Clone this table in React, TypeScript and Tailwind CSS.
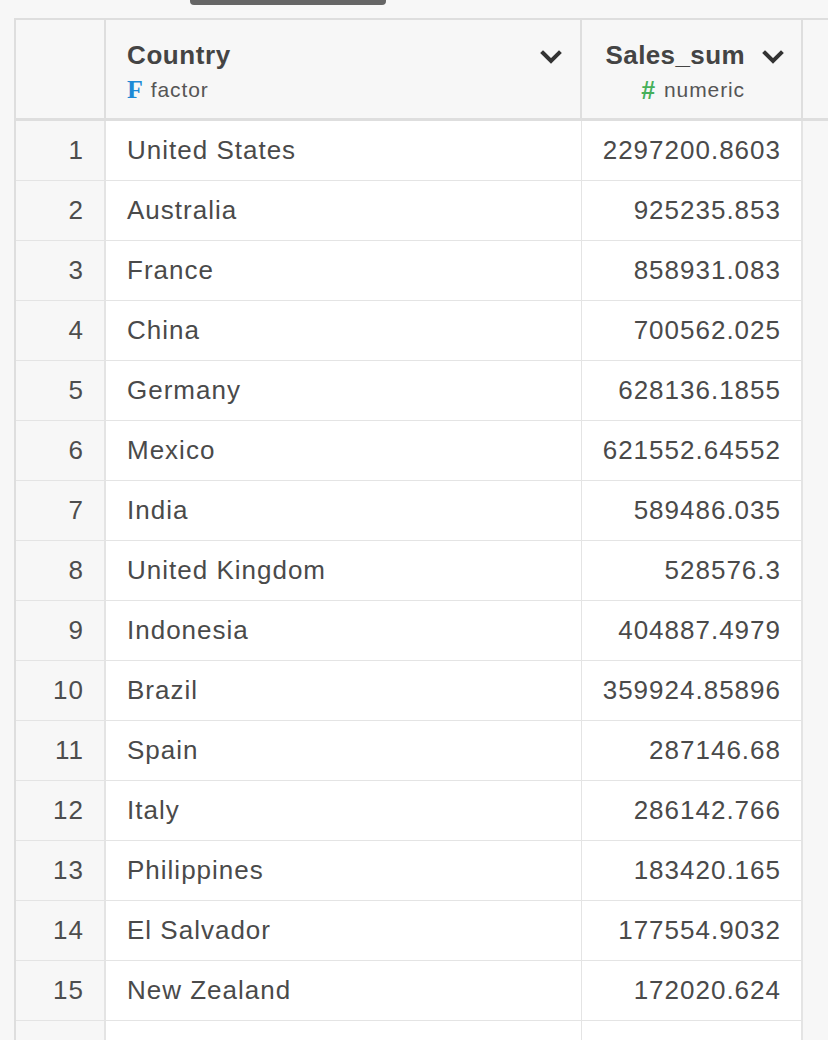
const rows: [string, string][] = [
  ["United States", "2297200.8603"],
  ["Australia", "925235.853"],
  ["France", "858931.083"],
  ["China", "700562.025"],
  ["Germany", "628136.1855"],
  ["Mexico", "621552.64552"],
  ["India", "589486.035"],
  ["United Kingdom", "528576.3"],
  ["Indonesia", "404887.4979"],
  ["Brazil", "359924.85896"],
  ["Spain", "287146.68"],
  ["Italy", "286142.766"],
  ["Philippines", "183420.165"],
  ["El Salvador", "177554.9032"],
  ["New Zealand", "172020.624"],
  ["", ""],
];

function Chevron() {
  return (
    <svg width="22" height="14" viewBox="0 0 22 14" className="shrink-0">
      <polyline
        points="3,3 11,11 19,3"
        fill="none"
        stroke="#333"
        strokeWidth="4"
        strokeLinecap="square"
      />
    </svg>
  );
}

export default function App() {
  return (
    <div
      className="min-h-screen w-[828px] overflow-hidden bg-[#f7f7f7] text-[#4a4a4a]"
      style={{ fontFamily: '"Liberation Sans", Arial, sans-serif' }}
    >
      <div className="relative h-[18px]">
        <div className="absolute left-[190px] top-0 h-[5px] w-[196px] rounded-b-[4px] bg-[#666]" />
      </div>

      <div className="ml-[14px] border-l-2 border-t-2 border-[#dedede]">
        {/* Header */}
        <div className="flex h-[101px] border-b-[3px] border-[#dedede]">
          <div className="w-[90px] shrink-0 border-r-2 border-[#dedede]" />
          <div className="flex w-[476px] shrink-0 items-start justify-between border-r-2 border-[#dedede] pl-[21px] pr-[18px] pt-[18px]">
            <div className="flex flex-col">
              <span className="text-[26px] font-bold leading-[34px] tracking-[0.6px] text-[#444]">
                Country
              </span>
              <span className="mt-[5px] flex items-center text-[21px] leading-[26px] tracking-[0.9px] text-[#555]">
                <span
                  className="mr-[7px] text-[26px] font-bold leading-none text-[#1d8ad6]"
                  style={{ fontFamily: '"Liberation Serif", serif' }}
                >
                  F
                </span>
                factor
              </span>
            </div>
            <div className="pt-[12px]">
              <Chevron />
            </div>
          </div>
          <div className="flex w-[221px] shrink-0 items-start justify-end gap-[17px] border-r-2 border-[#dedede] pr-[17px] pt-[18px]">
            <div className="flex flex-col items-end">
              <span className="text-[26px] font-bold leading-[34px] tracking-[0.4px] text-[#444]">
                Sales_sum
              </span>
              <span className="mt-[5px] flex items-center text-[21px] leading-[26px] tracking-[0.9px] text-[#555]">
                <span className="mr-[8px] text-[25px] font-bold leading-none text-[#46b05a]">
                  #
                </span>
                numeric
              </span>
            </div>
            <div className="pt-[12px]">
              <Chevron />
            </div>
          </div>
          <div className="flex-1" />
        </div>

        {/* Body */}
        {rows.map(([country, sales], i) => (
          <div key={i} className="flex h-[60px] w-[789px] text-[26px] tracking-[1px]">
            <div className="flex w-[90px] shrink-0 items-center justify-end border-b border-r-2 border-[#e4e4e4] pr-[20px] text-[#4d4d4d]">
              {country ? i + 1 : ""}
            </div>
            <div className="flex w-[476px] shrink-0 items-center border-b border-r border-[#e4e4e4] bg-white pl-[21px]">
              {country}
            </div>
            <div className="flex w-[221px] shrink-0 items-center justify-end border-b border-r-2 border-[#e4e4e4] bg-white pr-[20px]">
              {sales}
            </div>
          </div>
        ))}
      </div>
    </div>
  );
}
